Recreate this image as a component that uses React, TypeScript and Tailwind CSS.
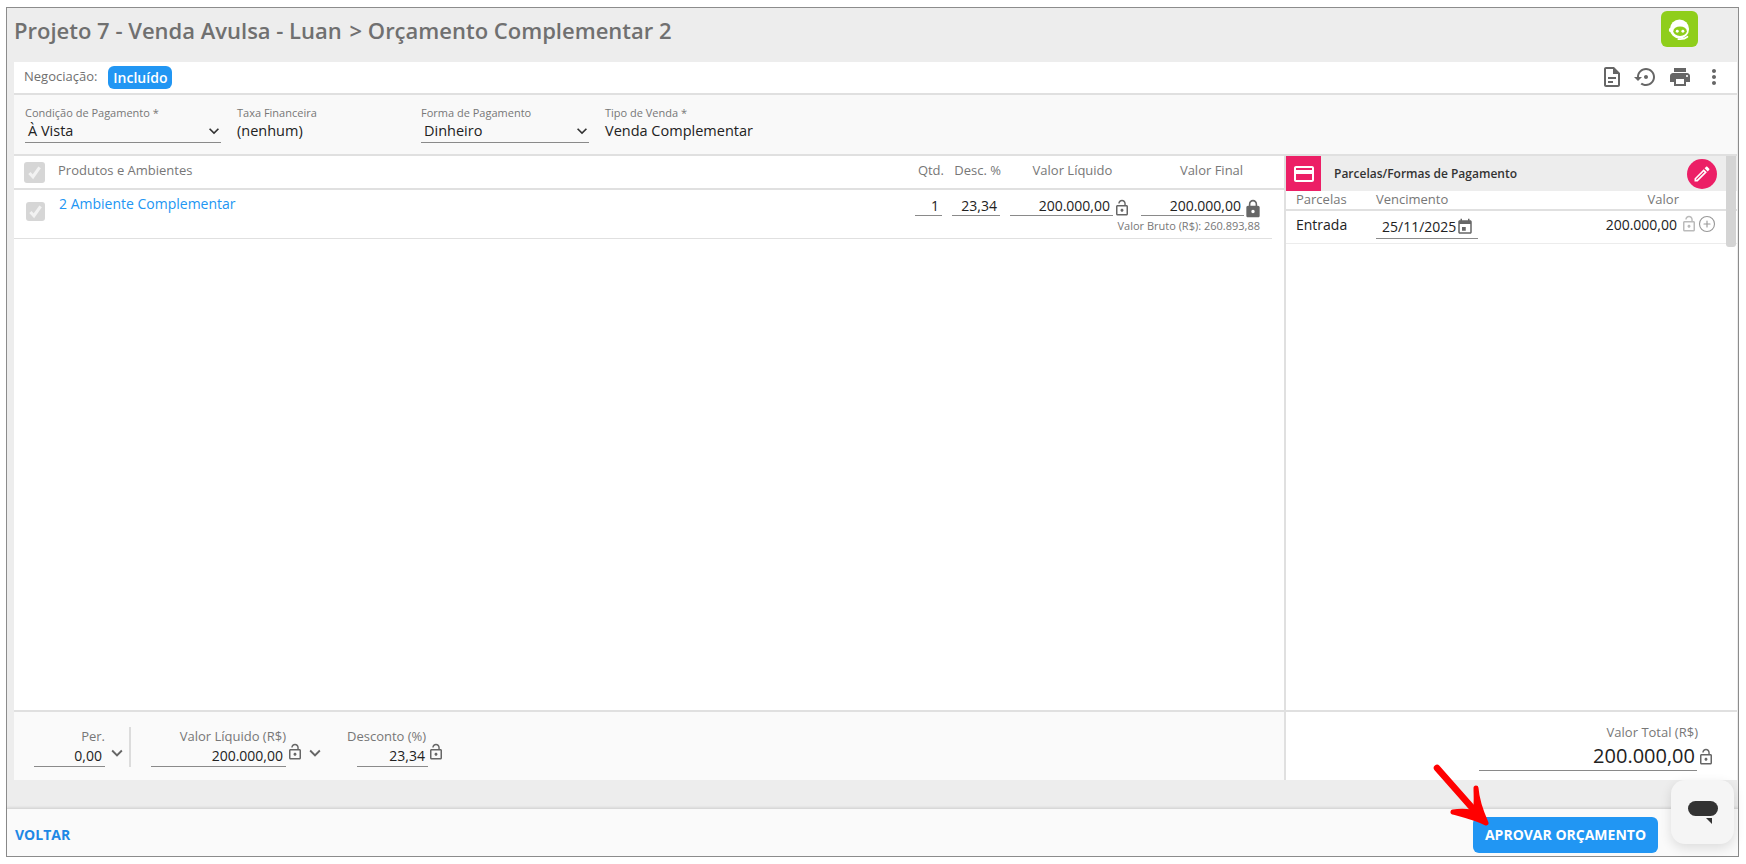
import React from "react";
import { CirclePlus } from "lucide-react";

const P = {
  lockOpen: "M12 17c1.1 0 2-.9 2-2s-.9-2-2-2-2 .9-2 2 .9 2 2 2zm6-9h-1V6c0-2.76-2.24-5-5-5S7 3.24 7 6h1.9c0-1.71 1.39-3.1 3.1-3.1 1.71 0 3.1 1.39 3.1 3.1v2H6c-1.1 0-2 .9-2 2v10c0 1.1.9 2 2 2h12c1.1 0 2-.9 2-2V10c0-1.1-.9-2-2-2zm0 12H6V10h12v10z",
  lock: "M18 8h-1V6c0-2.76-2.24-5-5-5S7 3.24 7 6v2H6c-1.1 0-2 .9-2 2v10c0 1.1.9 2 2 2h12c1.1 0 2-.9 2-2V10c0-1.1-.9-2-2-2zm-6 9c-1.1 0-2-.9-2-2s.9-2 2-2 2 .9 2 2-.9 2-2 2zm3.1-9H8.9V6c0-1.71 1.39-3.1 3.1-3.1 1.71 0 3.1 1.39 3.1 3.1v2z",
  doc: "M14 2H6c-1.1 0-1.99.9-1.99 2L4 20c0 1.1.89 2 1.99 2H18c1.1 0 2-.9 2-2V8l-6-6zM6 20V4h7v5h5v11H6zm2-8h8v2H8v-2zm0 4h5v2H8v-2z",
  restore: "M14 12c0-1.1-.9-2-2-2s-2 .9-2 2 .9 2 2 2 2-.9 2-2zm-2-9c-4.97 0-9 4.03-9 9H0l4 4 4-4H5c0-3.87 3.13-7 7-7s7 3.13 7 7-3.13 7-7 7c-1.51 0-2.91-.49-4.06-1.3l-1.42 1.44C8.04 20.3 9.94 21 12 21c4.97 0 9-4.03 9-9s-4.03-9-9-9z",
  print: "M19 8H5c-1.66 0-3 1.34-3 3v6h4v4h12v-4h4v-6c0-1.66-1.34-3-3-3zm-3 11H8v-5h8v5zm3-7c-.55 0-1-.45-1-1s.45-1 1-1 1 .45 1 1-.45 1-1 1zm-1-9H6v4h12V3z",
  dots: "M12 8c1.1 0 2-.9 2-2s-.9-2-2-2-2 .9-2 2 .9 2 2 2zm0 2c-1.1 0-2 .9-2 2s.9 2 2 2 2-.9 2-2-.9-2-2-2zm0 6c-1.1 0-2 .9-2 2s.9 2 2 2 2-.9 2-2-.9-2-2-2z",
  card: "M20 4H4c-1.11 0-1.99.89-1.99 2L2 18c0 1.11.89 2 2 2h16c1.11 0 2-.89 2-2V6c0-1.11-.89-2-2-2zm0 14H4v-6h16v6zm0-10H4V6h16v2z",
  event: "M8 12h5v5H8zM16 1v2H8V1H6v2H5c-1.11 0-1.99.9-1.99 2L3 19c0 1.1.89 2 2 2h14c1.1 0 2-.9 2-2V5c0-1.1-.9-2-2-2h-1V1h-2zm3 18H5V8h14v11z",
  chev: "M7.41 8.59 12 13.17l4.59-4.58L18 10l-6 6-6-6z",
  pencil: "M3 17.25V21h3.75L17.81 9.94l-3.75-3.75L3 17.25zM5.92 19H5v-.92l9.06-9.06.92.92L5.92 19zM20.71 5.63l-2.34-2.34c-.39-.39-1.02-.39-1.41 0l-1.83 1.83 3.75 3.75 1.83-1.83c.39-.39.39-1.02 0-1.41z",
};

function Ico({ d, className }: { d: string; className: string }) {
  return (
    <svg viewBox="0 0 24 24" className={className} fill="currentColor">
      <path d={d} />
    </svg>
  );
}

function Check({ className }: { className: string }) {
  return (
    <div className={`flex items-center justify-center rounded-[3px] bg-[#d6d6d6] ${className}`}>
      <svg viewBox="0 0 20 20" className="h-[17px] w-[17px]" fill="none" stroke="#f2f2f2" strokeWidth="3.6">
        <path d="M4 10.5 8.2 15 16 4" />
      </svg>
    </div>
  );
}

function Field({ label, value, wide, chevron }: { label: string; value: string; wide: string; chevron?: boolean }) {
  return (
    <div className={`flex flex-col ${wide}`}>
      <div className="text-[11px] leading-[15px] text-[#777]">{label}</div>
      {chevron ? (
        <div className="flex h-[23px] items-center justify-between border-b border-[#8a8a8a] pl-[3px] text-[14.5px] font-medium text-[#222]">
          <span>{value}</span>
          <Ico d={P.chev} className="-mr-[3px] h-[20px] w-[20px] text-[#333]" />
        </div>
      ) : (
        <div className="h-[23px] text-[14.5px] leading-[22px] font-medium text-[#222]">{value}</div>
      )}
    </div>
  );
}

function Under({ w, v, cls = "" }: { w: string; v: string; cls?: string }) {
  return <div className={`border-b border-[#8a8a8a] pr-[3px] text-right text-[14px] leading-[19px] font-medium text-[#222] ${w} ${cls}`}>{v}</div>;
}

function Arrow() {
  return (
    <svg className="pointer-events-none absolute left-[1430px] top-[760px] h-[68px] w-[64px]" viewBox="0 0 64 68">
      <path d="M7 8 L52 59" stroke="#ff0000" strokeWidth="6.5" strokeLinecap="round" fill="none" />
      <path
        d="M23 52 C33 50 41 52 45 52 C47 44 46 36 46 28 C47 42 52 54 56 63 C46 58 34 55 23 52 Z"
        stroke="#ff0000"
        strokeWidth="5"
        strokeLinejoin="round"
        fill="#ff0000"
      />
    </svg>
  );
}

export default function App() {
  return (
    <div className="relative h-[864px] w-[1746px] overflow-hidden bg-white pt-[7px] pl-[6px] font-['Open_Sans',sans-serif]">
      <div className="flex h-[850px] w-[1733px] flex-col border border-[#8c8c8c] bg-[#ededed]">
        {/* title */}
        <div className="flex h-[54px] shrink-0 items-start justify-between pl-[7px] pr-[40px]">
          <div className="mt-[7px] text-[22px] leading-[30px] font-semibold text-[#707070]">
            Projeto 7 - Venda Avulsa - Luan <span className="ml-[2px]">&gt;</span> Orçamento Complementar 2
          </div>
          <div className="mt-[3px] flex h-[36px] w-[37px] items-center justify-center rounded-[6px] bg-[#8fce1b]">
            <svg viewBox="0 0 24 24" className="h-[27px] w-[27px]">
              <circle cx="12" cy="11.5" r="8.5" fill="#fff" />
              <circle cx="4.5" cy="12.5" r="2" fill="#fff" />
              <ellipse cx="12.5" cy="13.5" rx="6" ry="4.2" fill="#8fce1b" />
              <circle cx="10" cy="13.5" r="1.3" fill="#fff" />
              <circle cx="15" cy="13.5" r="1.3" fill="#fff" />
              <path d="M11 20.5c3 .3 6-.3 8-2" stroke="#fff" strokeWidth="1.6" fill="none" strokeLinecap="round" />
            </svg>
          </div>
        </div>

        <div className="ml-[7px] mr-px flex min-h-0 flex-1 flex-col">
          {/* toolbar */}
          <div className="flex h-[33px] shrink-0 items-center border-b-2 border-[#e0e0e0] bg-white pb-[1px] pl-[10px]">
            <span className="text-[13px] text-[#6f6f6f]">Negociação:</span>
            <span className="ml-[11px] flex h-[23px] w-[64px] items-center justify-center rounded-[6px] bg-[#2196f3] text-[14px] font-semibold text-white">Incluído</span>
            <div className="ml-auto flex items-center text-[#666]">
              <Ico d={P.doc} className="h-[24px] w-[24px]" />
              <Ico d={P.restore} className="ml-[10px] h-[24px] w-[24px]" />
              <Ico d={P.print} className="ml-[10px] h-[24px] w-[24px]" />
              <Ico d={P.dots} className="ml-[10px] mr-[11px] h-[24px] w-[24px]" />
            </div>
          </div>
          {/* filters */}
          <div className="flex h-[61px] shrink-0 gap-[16px] border-b-2 border-[#e0e0e0] bg-[#f9f9f9] pt-[10px] pl-[11px]">
            <Field label="Condição de Pagamento *" value="À Vista" wide="w-[196px]" chevron />
            <Field label="Taxa Financeira" value="(nenhum)" wide="w-[168px]" />
            <Field label="Forma de Pagamento" value="Dinheiro" wide="w-[168px]" chevron />
            <Field label="Tipo de Venda *" value="Venda Complementar" wide="w-[200px]" />
          </div>

          {/* main */}
          <div className="flex h-[624px] shrink-0 bg-white">
            {/* left */}
            <div className="flex w-[1272px] shrink-0 flex-col border-r-2 border-[#e0e0e0]">
              <div className="flex h-[34px] shrink-0 items-center border-b-2 border-[#e0e0e0] pb-[2px] text-[13px] text-[#777]">
                <Check className="ml-[10px] mt-[2px] h-[21px] w-[21px]" />
                <span className="ml-[13px] flex-1">Produtos e Ambientes</span>
                <span className="w-[27px] text-right">Qtd.</span>
                <span className="ml-[7px] w-[50px] text-right">Desc. %</span>
                <span className="ml-[6px] w-[131px] text-center">Valor Líquido</span>
                <span className="w-[133px] pl-[14px] text-center">Valor Final</span>
                <span className="w-[13px]"></span>
              </div>
              <div className="mr-[12px] flex h-[49px] shrink-0 border-b border-[#e0e0e0] pt-[5px]">
                <Check className="ml-[12px] mt-[7px] h-[19px] w-[19px]" />
                <a className="ml-[14px] flex-1 text-[14px] leading-[18px] text-[#2196f3]">2 Ambiente Complementar</a>
                <div className="flex flex-col items-end">
                  <div className="flex items-start">
                    <Under w="w-[27px]" v="1" cls="mt-[1px]" />
                    <Under w="w-[48px]" v="23,34" cls="ml-[10px] mt-[1px]" />
                    <Under w="w-[103px]" v="200.000,00" cls="ml-[10px] mt-[1px]" />
                    <Ico d={P.lockOpen} className="mt-[4px] h-[18px] w-[18px] text-[#666]" />
                    <Under w="w-[103px]" v="200.000,00" cls="ml-[10px] mt-[1px]" />
                    <Ico d={P.lock} className="-ml-px mt-[4px] h-[20px] w-[20px] text-[#666]" />
                    <div className="w-[9px]" />
                  </div>
                  <div className="mr-[12px] text-[11px] leading-[14px] text-[#777]">Valor Bruto (R$): 260.893,88</div>
                </div>
              </div>
              <div className="flex-1" />
              <div className="flex h-[70px] shrink-0 border-t-2 border-[#e0e0e0] bg-[#fafafa] pt-[16px]">
                <div className="ml-[20px] w-[71px] text-right">
                  <div className="text-[13px] leading-[17px] text-[#777]">Per.</div>
                  <Under w="w-full" v="0,00" cls="leading-[21px]" />
                </div>
                <Ico d={P.chev} className="ml-[1px] mt-[14px] h-[22px] w-[22px] text-[#666]" />
                <div className="ml-[1px] -mt-px h-[40px] w-[2px] bg-[#dcdcdc]" />
                <div className="ml-[20px] w-[135px] text-right">
                  <div className="text-right text-[13px] leading-[17px] text-[#777]">Valor Líquido (R$)</div>
                  <Under w="w-full" v="200.000,00" cls="leading-[21px]" />
                </div>
                <Ico d={P.lockOpen} className="mt-[15px] h-[18px] w-[18px] text-[#666]" />
                <Ico d={P.chev} className="mt-[14px] h-[22px] w-[22px] text-[#666]" />
                <div className="ml-[21px] w-[81px] text-right">
                  <div className="whitespace-nowrap text-left text-[13px] leading-[17px] text-[#777]">Desconto (%)</div>
                  <Under w="ml-auto w-[71px]" v="23,34" cls="leading-[21px]" />
                </div>
                <Ico d={P.lockOpen} className="-ml-px mt-[15px] h-[18px] w-[18px] text-[#666]" />
              </div>
            </div>
            {/* right */}
            <div className="flex min-w-0 flex-1 flex-col">
              <div className="relative flex min-h-0 flex-1 flex-col">
                <div className="flex h-[35px] shrink-0 items-center bg-[#ededed]">
                  <div className="flex h-[35px] w-[35px] items-center justify-center bg-[#ec1f66]">
                    <Ico d={P.card} className="h-[24px] w-[24px] text-white" />
                  </div>
                  <span className="ml-[13px] flex-1 text-[12px] font-semibold text-[#333]">Parcelas/Formas de Pagamento</span>
                  <div className="mr-[20px] flex h-[30px] w-[30px] items-center justify-center rounded-full bg-[#ec1f66]">
                    <Ico d={P.pencil} className="h-[20px] w-[20px] text-white" />
                  </div>
                </div>
                <div className="flex h-[20px] shrink-0 items-center border-b-2 border-[#e0e0e0] pl-[10px] text-[13px] text-[#777]">
                  <span className="w-[80px]">Parcelas</span>
                  <span>Vencimento</span>
                  <span className="ml-auto mr-[58px]">Valor</span>
                </div>
                <div className="flex h-[33px] shrink-0 items-center border-b border-[#ececec] pb-[6px] pl-[10px] text-[#222]">
                  <span className="w-[80px] text-[14px] font-medium">Entrada</span>
                  <div className="mt-[6px] flex h-[24px] w-[102px] items-center border-b border-[#8a8a8a] pl-[6px] text-[14px] font-medium">
                    25/11/2025
                    <Ico d={P.event} className="h-[18px] w-[18px] text-[#666]" />
                  </div>
                  <span className="ml-auto text-[14px] font-medium">200.000,00</span>
                  <Ico d={P.lockOpen} className="ml-[3px] h-[18px] w-[18px] text-[#bbb]" />
                  <CirclePlus className="mr-[21px] h-[18px] w-[18px] text-[#999]" strokeWidth={1.5} />
                </div>
                <div className="absolute right-px top-0 h-[91px] w-[10px] rounded-b-[3px] bg-[#d4d4d4]" />
              </div>
              <div className="flex h-[70px] shrink-0 flex-col items-end border-t-2 border-[#e0e0e0] pt-[12px] pr-[22px]">
                <div className="mr-[17px] text-[13px] leading-[17px] text-[#777]">Valor Total (R$)</div>
                <div className="flex items-end">
                  <div className="w-[218px] border-b border-[#8a8a8a] pt-px pr-[2px] text-right text-[20px] leading-[28px] font-medium text-[#222]">200.000,00</div>
                  <Ico d={P.lockOpen} className="mb-[4px] h-[20px] w-[18px] text-[#666]" />
                </div>
              </div>
            </div>
          </div>
          <div className="flex-1" />
        </div>

        {/* footer */}
        <div className="flex h-[48px] shrink-0 items-center justify-between border-t border-[#d8d8d8] bg-[#fafafa] pl-[8px] pr-[80px] shadow-[0_-1px_2px_rgba(0,0,0,0.08)]">
          <span className="mt-[4px] text-[14px] font-bold text-[#1e88e5]">VOLTAR</span>
          <button className="mt-[4px] flex h-[36px] w-[185px] items-center justify-center rounded-[6px] bg-[#2196f3] text-[14px] font-bold text-white">APROVAR ORÇAMENTO</button>
        </div>
      </div>

      {/* chat widget */}
      <div className="absolute left-[1671px] top-[780px] flex h-[64px] w-[63px] items-center justify-center rounded-[14px] bg-[#f5f5f5] shadow-[0_4px_12px_rgba(0,0,0,0.12)]">
        <svg viewBox="0 0 30 24" className="h-[24px] w-[30px]">
          <rect x="0" y="1" width="30" height="15" rx="7.5" fill="#333" />
          <path d="M18 18h6v6z" fill="#333" />
        </svg>
      </div>
      <Arrow />
    </div>
  );
}
